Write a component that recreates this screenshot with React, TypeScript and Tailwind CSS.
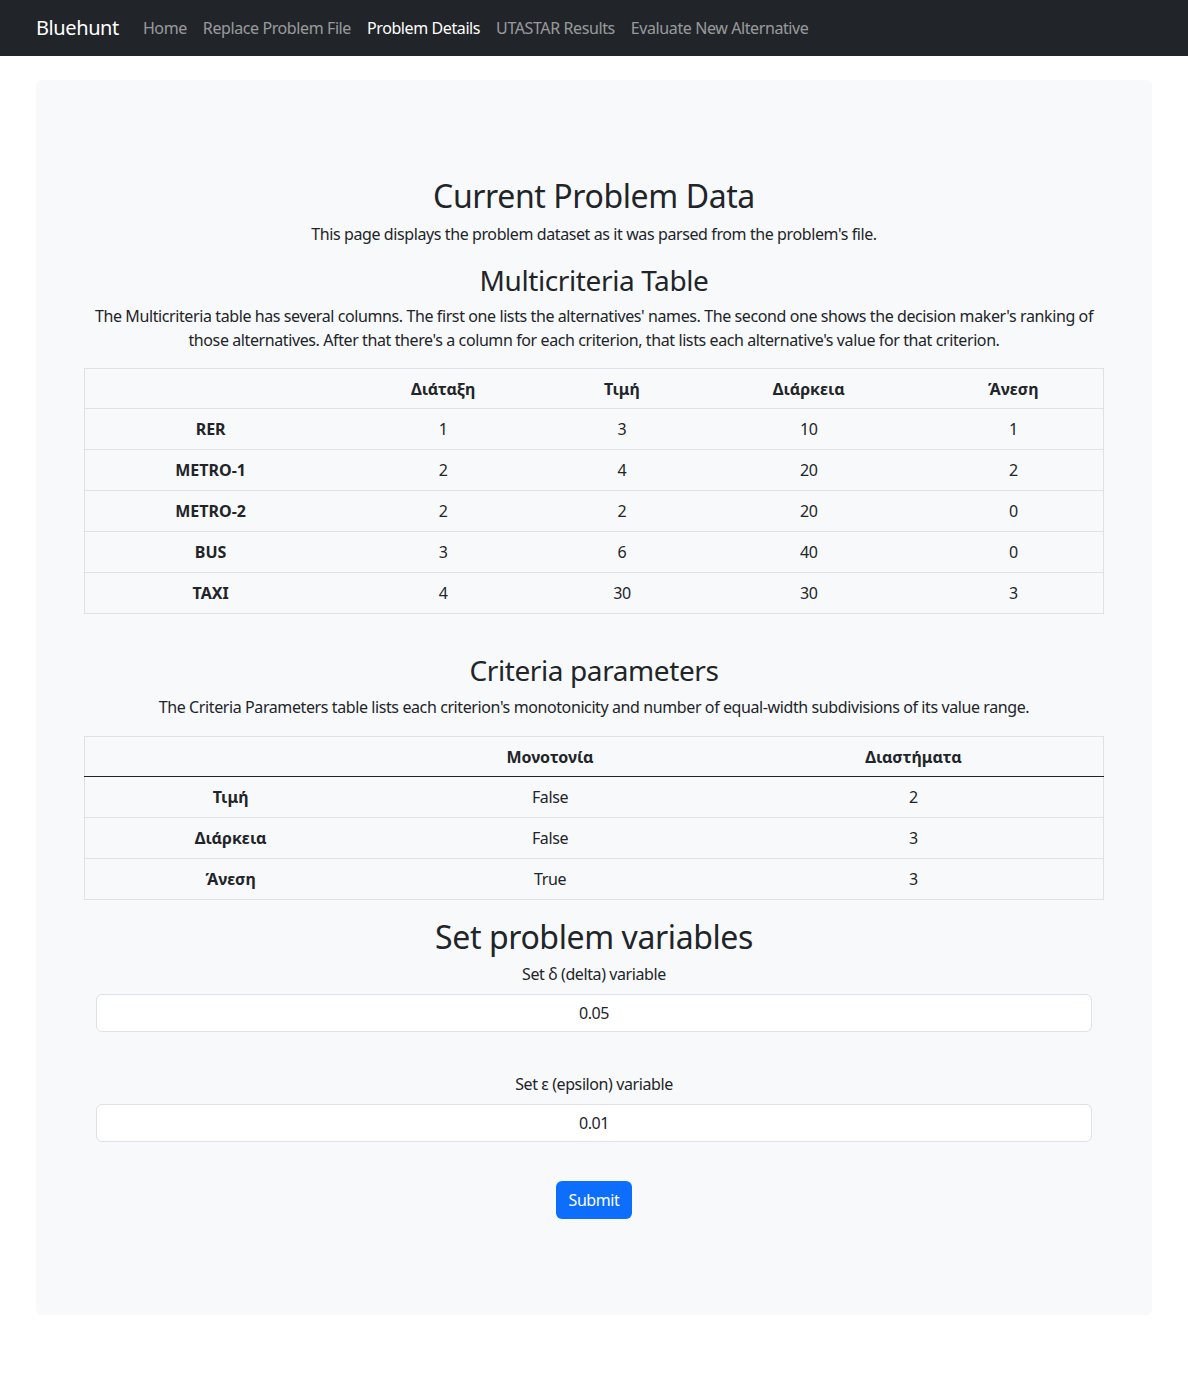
import { useState } from 'react'

const navLinks = [
  { label: 'Home', active: false },
  { label: 'Replace Problem File', active: false },
  { label: 'Problem Details', active: true },
  { label: 'UTASTAR Results', active: false },
  { label: 'Evaluate New Alternative', active: false }
]

const multicriteria = [
  ['RER', '1', '3', '10', '1'],
  ['METRO-1', '2', '4', '20', '2'],
  ['METRO-2', '2', '2', '20', '0'],
  ['BUS', '3', '6', '40', '0'],
  ['TAXI', '4', '30', '30', '3']
]

const criteria = [
  ['Τιμή', 'False', '2'],
  ['Διάρκεια', 'False', '3'],
  ['Άνεση', 'True', '3']
]

const mcWidths = ['w-[252px]', 'w-[214px]', 'w-[144px]', 'w-[230px]', 'w-[180px]']
const crWidths = ['w-[292px]', 'w-[348px]', 'w-[380px]']

function Navbar() {
  return (
    <nav className="flex h-14 items-center bg-[#212529] px-9">
      <span className="mr-6 text-[20px] leading-[30px] text-white">Bluehunt</span>
      <ul className="flex items-center gap-4">
        {navLinks.map((link) => (
          <li
            key={link.label}
            className={link.active ? 'text-white' : 'text-[rgba(255,255,255,0.55)]'}
          >
            {link.label}
          </li>
        ))}
      </ul>
    </nav>
  )
}

function VariableField({ label, value }: { label: string; value: string }) {
  const [val, setVal] = useState(value)
  return (
    <div className="flex flex-col items-center">
      <label className="mb-2 leading-6">{label}</label>
      <input
        className="h-[38px] w-[996px] rounded-md border border-[#dee2e6] bg-white text-center tracking-[-0.025em] text-[#212529] outline-none"
        value={val}
        onChange={(e) => setVal(e.target.value)}
      />
    </div>
  )
}

export default function App() {
  return (
    <div className="min-h-[1387px] bg-white font-['Noto_Sans',sans-serif] text-base tracking-[-0.025em] text-[#212529]">
      <Navbar />
      <main className="px-9 pt-6">
        <div className="rounded-md bg-[#f8f9fa] px-12 pb-24 pt-[97px] text-center">
          <h2 className="text-[32px] font-normal leading-[38px]">Current Problem Data</h2>
          <p className="mt-[7px] leading-6">
            This page displays the problem dataset as it was parsed from the problem's file.
          </p>

          <h3 className="mt-[17px] text-[28px] leading-[34px]">Multicriteria Table</h3>
          <p className="mx-auto mt-[7px] leading-6">
            The Multicriteria table has several columns. The first one lists the alternatives'
            names. The second one shows the decision maker's ranking of those alternatives. After
            that there's a column for each criterion, that lists each alternative's value for that
            criterion.
          </p>

          <table className="mt-4 w-full border-collapse border border-[#dee2e6]">
            <tbody>
              <tr className="h-10">
                {['', 'Διάταξη', 'Τιμή', 'Διάρκεια', 'Άνεση'].map((h, i) => (
                  <th key={i} className={`${mcWidths[i]} font-bold tracking-normal`}>
                    {h}
                  </th>
                ))}
              </tr>
              {multicriteria.map((row) => (
                <tr key={row[0]} className="h-[41px] border-t border-[#dee2e6] first:border-t-0">
                  {row.map((cell, i) =>
                    i === 0 ? (
                      <th key={i} className="font-bold tracking-normal">
                        {cell}
                      </th>
                    ) : (
                      <td key={i}>{cell}</td>
                    )
                  )}
                </tr>
              ))}
            </tbody>
          </table>

          <h3 className="mt-[39px] text-[28px] leading-[34px]">Criteria parameters</h3>
          <p className="mt-2 leading-6">
            The Criteria Parameters table lists each criterion's monotonicity and number of
            equal-width subdivisions of its value range.
          </p>

          <table className="mt-[17px] w-full border-collapse border border-[#dee2e6]">
            <thead>
              <tr className="h-10 border-b border-[#212529]">
                {['', 'Μονοτονία', 'Διαστήματα'].map((h, i) => (
                  <th key={i} className={`${crWidths[i]} font-bold tracking-normal`}>
                    {h}
                  </th>
                ))}
              </tr>
            </thead>
            <tbody>
              {criteria.map((row, r) => (
                <tr
                  key={row[0]}
                  className={`h-[41px] ${r > 0 ? 'border-t border-[#dee2e6]' : ''}`}
                >
                  <th className="font-bold tracking-normal">{row[0]}</th>
                  <td>{row[1]}</td>
                  <td>{row[2]}</td>
                </tr>
              ))}
            </tbody>
          </table>

          <h2 className="mt-[18px] text-[32px] leading-[38px]">Set problem variables</h2>
          <div className="mt-[6px] flex flex-col gap-10">
            <VariableField label="Set δ (delta) variable" value="0.05" />
            <VariableField label="Set ε (epsilon) variable" value="0.01" />
          </div>

          <button className="mt-[39px] h-[38px] rounded-md bg-[#0d6efd] px-[13px] leading-6 text-white">
            Submit
          </button>
        </div>
      </main>
    </div>
  )
}
